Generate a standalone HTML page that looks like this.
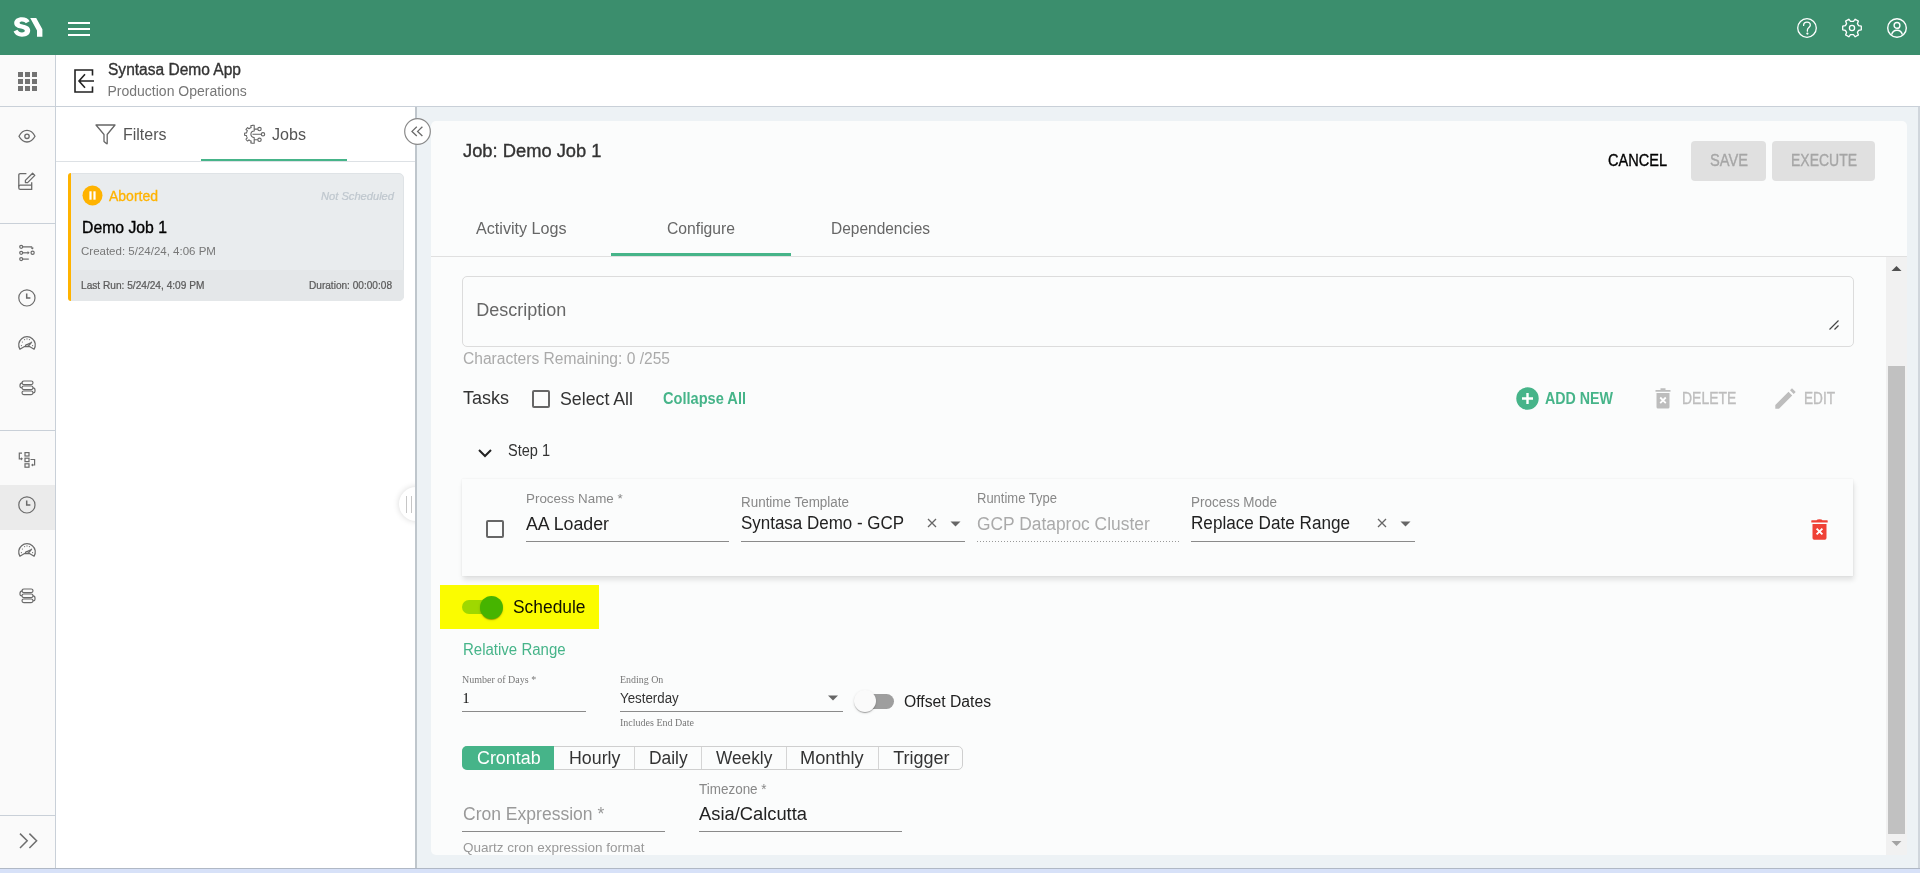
<!DOCTYPE html>
<html><head><meta charset="utf-8">
<style>
*{box-sizing:border-box;margin:0;padding:0}
html,body{width:1920px;height:873px;overflow:hidden;background:#fff;font-family:"Liberation Sans",sans-serif}
.a{position:absolute}
.t{position:absolute;line-height:1;white-space:nowrap}
svg{position:absolute;overflow:visible}
</style></head><body>
<div class="a" style="left:0px;top:0px;width:1920px;height:55px;background:#3b8e6d;"></div>
<div class="a" style="left:0px;top:55px;width:55px;height:813px;background:#fafafa;"></div>
<div class="a" style="left:55px;top:55px;width:1px;height:813px;background:#c9d0d8;"></div>
<div class="a" style="left:0px;top:106px;width:1920px;height:1px;background:#c9d0d8;"></div>
<div class="a" style="left:56px;top:107px;width:359px;height:761px;background:#ffffff;"></div>
<div class="a" style="left:399px;top:487px;width:34px;height:34px;background:#fff;border-radius:50%;box-shadow:0 0 6px rgba(0,0,0,.16)"></div>
<div class="a" style="left:406px;top:496px;width:1px;height:17px;background:#c6c6c6;"></div>
<div class="a" style="left:411px;top:496px;width:1px;height:17px;background:#c6c6c6;"></div>
<div class="a" style="left:415px;top:107px;width:2px;height:761px;background:#bfc6cc;"></div>
<div class="a" style="left:417px;top:107px;width:1501px;height:761px;background:#edf2f5;"></div>
<div class="a" style="left:1918px;top:107px;width:2px;height:761px;background:#d0d6dc;"></div>
<div class="a" style="left:0px;top:868px;width:1920px;height:1px;background:#b0b8c5;"></div>
<div class="a" style="left:0px;top:869px;width:1920px;height:4px;background:#d7e1f8;"></div>
<div class="a" style="left:0px;top:223px;width:55px;height:1px;background:#c9d0d8;"></div>
<div class="a" style="left:0px;top:430px;width:55px;height:1px;background:#c9d0d8;"></div>
<div class="a" style="left:0px;top:815px;width:55px;height:1px;background:#c9d0d8;"></div>
<div class="a" style="left:0px;top:485px;width:55px;height:45px;background:#ebebeb;"></div>
<div class="a" style="left:431px;top:121px;width:1476px;height:734px;background:#fbfcfc;border-radius:5px"></div>
<svg style="left:0;top:0" width="60" height="55" viewBox="0 0 60 55">
<path d="M29.6 21.2 C28.4 18.8 25.6 17.2 22 17.2 C17.4 17.2 14.2 19.6 14.2 23 C14.2 26.6 17.4 27.8 21 28.6 C23.6 29.2 24.8 29.6 24.8 30.8 C24.8 31.8 23.6 32.4 22 32.4 C19.8 32.4 18.2 31.4 17.4 29.8 L13.6 31.6 C14.8 34.6 18 36.8 22 36.8 C27 36.8 30.2 34.4 30.2 30.6 C30.2 26.8 27 25.6 23.4 24.8 C20.8 24.2 19.6 23.8 19.6 22.8 C19.6 22 20.6 21.4 22 21.4 C23.8 21.4 25 22.2 25.8 23.2 Z" fill="#fff"/>
<path d="M30.2 18 L36.2 18 L42.4 29.2 L42.4 36.8 L37 36.8 L37 30.6 Z" fill="#fff"/>
</svg>
<div class="a" style="left:68px;top:22px;width:22px;height:2px;background:#fff;"></div>
<div class="a" style="left:68px;top:27.5px;width:22px;height:2.5px;background:#fff;"></div>
<div class="a" style="left:68px;top:33.5px;width:22px;height:2px;background:#fff;"></div>
<svg style="left:1797px;top:18px" width="20" height="20" viewBox="0 0 20 20" fill="none" stroke="#fff" stroke-width="1.3">
<circle cx="10" cy="10" r="9.3"/>
<path d="M6.6 7.4 C6.6 5.4 8.1 4.2 10 4.2 C11.9 4.2 13.3 5.5 13.3 7.2 C13.3 9.2 10.4 9.8 10.4 12 L10.4 13.2" stroke-linecap="round"/>
<circle cx="10.4" cy="15.6" r="0.5" fill="#fff"/>
</svg>
<svg style="left:1842px;top:18px" width="20" height="20" viewBox="0 0 20 20" fill="none" stroke="#fff" stroke-width="1.3" stroke-linejoin="round">
<g transform="rotate(90 10 10)"><path d="M8.2 0.7 L11.8 0.7 L12.3 3.4 L14.3 4.6 L16.9 3.6 L18.8 6.8 L16.6 8.5 L16.6 11.5 L18.8 13.2 L16.9 16.4 L14.3 15.4 L12.3 16.6 L11.8 19.3 L8.2 19.3 L7.7 16.6 L5.7 15.4 L3.1 16.4 L1.2 13.2 L3.4 11.5 L3.4 8.5 L1.2 6.8 L3.1 3.6 L5.7 4.6 L7.7 3.4 Z"/></g>
<circle cx="10" cy="10" r="2.6"/>
</svg>
<svg style="left:1887px;top:18px" width="20" height="20" viewBox="0 0 20 20" fill="none" stroke="#fff" stroke-width="1.4">
<circle cx="10" cy="10" r="9.3"/>
<circle cx="10" cy="7.4" r="2.9"/>
<path d="M4.6 16.6 C5.4 13.6 7.6 12.2 10 12.2 C12.4 12.2 14.6 13.6 15.4 16.6"/>
</svg>
<div class="a" style="left:18.2px;top:72.2px;width:4.6px;height:4.6px;background:#737373;"></div>
<div class="a" style="left:18.2px;top:79.2px;width:4.6px;height:4.6px;background:#737373;"></div>
<div class="a" style="left:18.2px;top:86.2px;width:4.6px;height:4.6px;background:#737373;"></div>
<div class="a" style="left:25.2px;top:72.2px;width:4.6px;height:4.6px;background:#737373;"></div>
<div class="a" style="left:25.2px;top:79.2px;width:4.6px;height:4.6px;background:#737373;"></div>
<div class="a" style="left:25.2px;top:86.2px;width:4.6px;height:4.6px;background:#737373;"></div>
<div class="a" style="left:32.2px;top:72.2px;width:4.6px;height:4.6px;background:#737373;"></div>
<div class="a" style="left:32.2px;top:79.2px;width:4.6px;height:4.6px;background:#737373;"></div>
<div class="a" style="left:32.2px;top:86.2px;width:4.6px;height:4.6px;background:#737373;"></div>
<svg style="left:18px;top:129px" width="18" height="14" viewBox="0 0 18 14" fill="none" stroke="#6b6b6b" stroke-width="1.3">
<path d="M1 7.2 C3 3.4 6 1.4 9 1.4 C12 1.4 15 3.4 17 7.2 C15 11 12 13 9 13 C6 13 3 11 1 7.2 Z"/><circle cx="9" cy="7.3" r="2.2"/></svg>
<svg style="left:17px;top:172px" width="19" height="19" viewBox="0 0 19 19" fill="none" stroke="#6b6b6b" stroke-width="1.3" stroke-linejoin="round">
<path d="M9.4 1.6 L3.2 1.6 Q1.8 1.6 1.8 3 L1.8 16 Q1.8 17.4 3.2 17.4 L14.7 17.4 L14.7 10.2"/>
<path d="M1.8 14.5 Q1.8 13.2 3.2 13.2 L14.7 13.2"/>
<path d="M8.4 10.6 L8.4 8.4 L15.6 1.2 L17.8 3.4 L10.6 10.6 Z"/></svg>
<svg style="left:19px;top:244px" width="17" height="17" viewBox="0 0 17 17" fill="none" stroke="#6b6b6b" stroke-width="1.2">
<circle cx="2.2" cy="2.8" r="1.5"/><path d="M3.7 2.8 L12.6 2.8 L13.4 3.8"/><path d="M11.6 3.8 L15 3.8 L13.3 5.6 Z" fill="#6b6b6b" stroke="none"/>
<circle cx="2.2" cy="8.8" r="1.5"/><path d="M3.7 8.8 L9 8.8"/><path d="M8.6 7 L10.6 8.8 L8.6 10.6 Z" fill="#6b6b6b" stroke="none"/><circle cx="13.6" cy="8.8" r="1.6"/>
<circle cx="2.2" cy="15.1" r="1.5"/><path d="M3.7 15.1 L9.8 15.1"/></svg>
<svg style="left:18px;top:289px" width="18" height="18" viewBox="0 0 18 18" fill="none" stroke="#6b6b6b" stroke-width="1.2">
<circle cx="8.9" cy="8.9" r="8.1"/><path d="M8.7 4.6 L8.7 8.9 L12.4 8.9" stroke-width="1.5"/></svg>
<svg style="left:18px;top:336px" width="18" height="14" viewBox="0 0 18 14" fill="none" stroke="#6b6b6b" stroke-width="1.2" stroke-linejoin="round">
<path d="M1.9 13.3 A8.3 8.3 0 1 1 16.1 13.3 L11.5 10.6 L6.5 10.6 Z"/>
<g fill="#6b6b6b" stroke="none"><circle cx="3.4" cy="9.6" r=".6"/><circle cx="4.4" cy="6" r=".6"/><circle cx="6.6" cy="3.6" r=".6"/><circle cx="9" cy="2.9" r=".6"/><circle cx="11.4" cy="3.6" r=".6"/><circle cx="13.6" cy="6" r=".6"/><circle cx="14.6" cy="9.6" r=".6"/></g>
<path d="M7.4 9.6 Q8 8.2 9.6 8.4 L13.4 6.6 L10.6 9.8 Q9 11 7.4 9.6 Z"/></svg>
<svg style="left:20px;top:380px" width="16" height="15" viewBox="0 0 16 15" fill="none" stroke="#6b6b6b" stroke-width="1.2">
<rect x="2" y="1" width="11" height="3.6" rx="1.8"/><rect x="2" y="6" width="11" height="3.6" rx="1.8"/><rect x="2" y="11" width="11" height="3.6" rx="1.8"/>
<path d="M2.6 2.8 Q0 2.8 0 5.2 L0 6.4 Q0 7.8 2 7.8"/><path d="M13 7.8 Q15 7.8 15 10 L15 11.2 Q15 12.8 13 12.8"/></svg>
<svg style="left:18px;top:452px" width="18" height="17" viewBox="0 0 18 17" fill="none" stroke="#6b6b6b" stroke-width="1.2">
<rect x="7" y="0.6" width="4" height="3.4"/><rect x="7" y="6.2" width="4" height="3.4"/><rect x="7" y="11.8" width="4" height="3.4"/>
<path d="M4 1.2 L1.3 1.2 L1.3 6.8 L3.4 6.8"/><path d="M3 5.2 L5 6.8 L3 8.4 Z" fill="#6b6b6b" stroke="none"/>
<path d="M12.5 7.5 L16.6 7.5 L16.6 13 L14.4 13"/><path d="M15 11.4 L13 13 L15 14.6 Z" fill="#6b6b6b" stroke="none"/></svg>
<svg style="left:18px;top:496px" width="18" height="18" viewBox="0 0 18 18" fill="none" stroke="#6b6b6b" stroke-width="1.2">
<circle cx="8.9" cy="8.9" r="8.1"/><path d="M8.7 4.6 L8.7 8.9 L12.4 8.9" stroke-width="1.5"/></svg>
<svg style="left:18px;top:543px" width="18" height="14" viewBox="0 0 18 14" fill="none" stroke="#6b6b6b" stroke-width="1.2" stroke-linejoin="round">
<path d="M1.9 13.3 A8.3 8.3 0 1 1 16.1 13.3 L11.5 10.6 L6.5 10.6 Z"/>
<g fill="#6b6b6b" stroke="none"><circle cx="3.4" cy="9.6" r=".6"/><circle cx="4.4" cy="6" r=".6"/><circle cx="6.6" cy="3.6" r=".6"/><circle cx="9" cy="2.9" r=".6"/><circle cx="11.4" cy="3.6" r=".6"/><circle cx="13.6" cy="6" r=".6"/><circle cx="14.6" cy="9.6" r=".6"/></g>
<path d="M7.4 9.6 Q8 8.2 9.6 8.4 L13.4 6.6 L10.6 9.8 Q9 11 7.4 9.6 Z"/></svg>
<svg style="left:20px;top:588px" width="16" height="15" viewBox="0 0 16 15" fill="none" stroke="#6b6b6b" stroke-width="1.2">
<rect x="2" y="1" width="11" height="3.6" rx="1.8"/><rect x="2" y="6" width="11" height="3.6" rx="1.8"/><rect x="2" y="11" width="11" height="3.6" rx="1.8"/>
<path d="M2.6 2.8 Q0 2.8 0 5.2 L0 6.4 Q0 7.8 2 7.8"/><path d="M13 7.8 Q15 7.8 15 10 L15 11.2 Q15 12.8 13 12.8"/></svg>
<svg style="left:19px;top:833px" width="19" height="16" viewBox="0 0 19 16" fill="none" stroke="#6e6e6e" stroke-width="1.5">
<path d="M1 0.6 L8.2 7.8 L1 15"/><path d="M10.4 0.6 L17.6 7.8 L10.4 15"/></svg>
<svg style="left:74px;top:69px" width="21" height="24" viewBox="0 0 21 24" fill="none" stroke="#222" stroke-width="1.6">
<path d="M18.5 6.5 L18.5 1 L1 1 L1 23 L18.5 23 L18.5 17.5"/><path d="M5 12 L20 12 M11 5.2 L5 12 L11 18.8"/></svg>
<div class="a" style="left:56px;top:161px;width:359px;height:1px;background:#dde1e5;"></div>
<div class="a" style="left:201px;top:159px;width:146px;height:2px;background:#46b489;"></div>
<svg style="left:95px;top:124px" width="21" height="21" viewBox="0 0 21 21" fill="none" stroke="#666" stroke-width="1.3" stroke-linejoin="round">
<path d="M1 1 L20 1 L12.2 10.5 L12.2 19.3 Q12.2 20.2 11.4 19.6 L9 17.6 L9 10.5 Z"/></svg>
<svg style="left:243px;top:124px" width="23" height="21" viewBox="0 0 23 21" fill="none" stroke="#666" stroke-width="1.1" stroke-linejoin="round">
<path d="M11.2 1.3 L10.29 1.31 L9.97 1.32 L9.66 1.35 L9.35 1.39 L9.04 1.44 L8.73 1.50 L8.42 1.57 L8.12 1.65 L7.82 1.74 L8.14 3.53 L7.90 3.62 L7.67 3.72 L7.44 3.83 L7.22 3.94 L7.00 4.06 L6.78 4.19 L6.57 4.33 L6.37 4.48 L6.17 4.63 L5.97 4.78 L4.58 3.61 L4.35 3.83 L4.13 4.05 L3.91 4.28 L3.71 4.51 L3.51 4.76 L3.32 5.01 L3.14 5.27 L2.97 5.53 L4.36 6.70 L4.24 6.92 L4.13 7.14 L4.02 7.37 L3.92 7.60 L3.83 7.84 L3.75 8.08 L3.68 8.32 L3.61 8.56 L3.56 8.80 L3.51 9.05 L1.69 9.05 L1.65 9.36 L1.62 9.67 L1.61 9.99 L1.60 10.30 L1.61 10.61 L1.62 10.93 L1.65 11.24 L1.69 11.55 L3.51 11.55 L3.56 11.80 L3.61 12.04 L3.68 12.28 L3.75 12.52 L3.83 12.76 L3.92 13.00 L4.02 13.23 L4.13 13.46 L4.24 13.68 L4.36 13.90 L2.97 15.07 L3.14 15.33 L3.32 15.59 L3.51 15.84 L3.71 16.09 L3.91 16.32 L4.13 16.55 L4.35 16.77 L4.58 16.99 L5.97 15.82 L6.17 15.97 L6.37 16.12 L6.57 16.27 L6.78 16.41 L7.00 16.54 L7.22 16.66 L7.44 16.77 L7.67 16.88 L7.90 16.98 L8.14 17.07 L7.82 18.86 L8.12 18.95 L8.42 19.03 L8.73 19.10 L9.04 19.16 L9.35 19.21 L9.66 19.25 L9.97 19.28 L10.29 19.29 L11.2 19.3 L11.2 13.6 A3.3 3.3 0 0 1 11.2 7 Z"/>
<path d="M9.5 10.3 L18.3 10.3 M11.2 5.1 L14.8 5.1 M11.2 15.8 L14.8 15.8"/>
<circle cx="16.5" cy="5.1" r="1.7"/><circle cx="20" cy="10.3" r="1.7"/><circle cx="16.5" cy="15.8" r="1.7"/></svg>
<div class="a" style="left:68px;top:173px;width:336px;height:128px;background:#e9ecee;border-radius:5px;border:1px solid #dfe3e6"></div>
<div class="a" style="left:71px;top:270px;width:333px;height:31px;background:#e4e7e9;border-bottom-right-radius:5px"></div>
<div class="a" style="left:68px;top:173px;width:3px;height:128px;background:#ffb300;border-radius:5px 0 0 5px"></div>
<svg style="left:82px;top:185px" width="21" height="21" viewBox="0 0 21 21"><circle cx="10.5" cy="10.5" r="10" fill="#ffb300"/>
<rect x="7.4" y="6.3" width="2.2" height="8.4" fill="#fff"/><rect x="11.4" y="6.3" width="2.2" height="8.4" fill="#fff"/></svg>
<svg style="left:404px;top:118px" width="27" height="27" viewBox="0 0 27 27" fill="#fff" stroke="#8a8a8a" stroke-width="1.2">
<circle cx="13.5" cy="13.5" r="12.8"/><path d="M12.8 8.8 L8 13.4 L12.8 18 M18.4 8.8 L13.6 13.4 L18.4 18" fill="none" stroke="#6a6a6a" stroke-width="1.3"/></svg>
<div class="a" style="left:1691px;top:141px;width:75px;height:40px;background:#e0e0e0;border-radius:4px"></div>
<div class="a" style="left:1772px;top:141px;width:103px;height:40px;background:#e0e0e0;border-radius:4px"></div>
<div class="a" style="left:431px;top:256px;width:1476px;height:1px;background:#e0e0e0;"></div>
<div class="a" style="left:611px;top:253px;width:180px;height:3px;background:#46b489;"></div>
<div class="a" style="left:1886px;top:257px;width:21px;height:598px;background:#f1f1f1;"></div>
<div class="a" style="left:1888px;top:366px;width:17px;height:468px;background:#c1c1c1;"></div>
<svg style="left:1891px;top:265px" width="11" height="7" viewBox="0 0 11 7"><path d="M0.5 6 L5.5 1 L10.5 6 Z" fill="#505050"/></svg>
<svg style="left:1891px;top:840px" width="11" height="7" viewBox="0 0 11 7"><path d="M0.5 1 L5.5 6 L10.5 1 Z" fill="#a3a3a3"/></svg>
<div class="a" style="left:462px;top:276px;width:1392px;height:71px;background:transparent;border:1px solid #dcdcdc;border-radius:5px"></div>
<svg style="left:1828px;top:319px" width="12" height="12" viewBox="0 0 12 12" stroke="#444" stroke-width="1.2"><path d="M1.5 10.5 L10.5 1.5 M6.5 10.5 L10.5 6.5"/></svg>
<div class="a" style="left:532px;top:390px;width:18px;height:18px;background:transparent;border:2px solid #666;border-radius:2px"></div>
<svg style="left:1516px;top:387px" width="23" height="23" viewBox="0 0 23 23"><circle cx="11.5" cy="11.5" r="11.2" fill="#46b489"/>
<path d="M11.5 6 L11.5 17 M6 11.5 L17 11.5" stroke="#fff" stroke-width="2.4"/></svg>
<svg style="left:1655px;top:388px" width="16" height="21" viewBox="0 0 16 21"><path d="M0.5 2 L15.5 2 L15.5 3.8 L0.5 3.8 Z M5.5 0.3 L10.5 0.3 L10.5 2 L5.5 2 Z" fill="#bdbdbd"/>
<path d="M1.5 5 L14.5 5 L14.5 19 Q14.5 20.6 13 20.6 L3 20.6 Q1.5 20.6 1.5 19 Z" fill="#bdbdbd"/><path d="M5.2 9.5 L10.8 15.1 M10.8 9.5 L5.2 15.1" stroke="#fff" stroke-width="1.8"/></svg>
<svg style="left:1775px;top:388px" width="21" height="21" viewBox="0 0 21 21"><path d="M0.3 17 L13.5 3.8 L17.2 7.5 L4 20.7 L0.3 20.7 Z M15 2.3 L17 0.3 L20.7 4 L18.7 6 Z" fill="#bdbdbd"/></svg>
<svg style="left:478px;top:449px" width="14" height="9" viewBox="0 0 14 9" fill="none" stroke="#222" stroke-width="2"><path d="M1 1 L7 7 L13 1"/></svg>
<div class="a" style="left:462px;top:479px;width:1391px;height:97px;background:#fbfcfc;box-shadow:1px 4px 5px rgba(0,0,0,.10),0 0 2px rgba(0,0,0,.07)"></div>
<div class="a" style="left:486px;top:520px;width:18px;height:18px;background:transparent;border:2px solid #666;border-radius:2px"></div>
<div class="a" style="left:526px;top:541px;width:203px;height:1px;background:#8a8a8a;"></div>
<div class="a" style="left:741px;top:541px;width:224px;height:1px;background:#8a8a8a;"></div>
<svg style="left:927px;top:518px" width="10" height="10" viewBox="0 0 10 10" stroke="#666" stroke-width="1.3"><path d="M1 1 L9 9 M9 1 L1 9"/></svg>
<svg style="left:950px;top:521px" width="11" height="6" viewBox="0 0 11 6"><path d="M0.5 0.5 L10.5 0.5 L5.5 5.5 Z" fill="#666"/></svg>
<div class="a" style="left:977px;top:541px;width:202px;height:1px;background-image:linear-gradient(to right,#999 50%,transparent 50%);background-size:3px 1px"></div>
<div class="a" style="left:1191px;top:541px;width:224px;height:1px;background:#8a8a8a;"></div>
<svg style="left:1377px;top:518px" width="10" height="10" viewBox="0 0 10 10" stroke="#666" stroke-width="1.3"><path d="M1 1 L9 9 M9 1 L1 9"/></svg>
<svg style="left:1400px;top:521px" width="11" height="6" viewBox="0 0 11 6"><path d="M0.5 0.5 L10.5 0.5 L5.5 5.5 Z" fill="#666"/></svg>
<svg style="left:1811px;top:519px" width="17" height="21" viewBox="0 0 17 21"><path d="M0.3 1.8 Q0.3 1.3 0.8 1.3 L5.5 1.3 Q6 0.2 8.5 0.2 Q11 0.2 11.5 1.3 L16.2 1.3 Q16.7 1.3 16.7 1.8 L16.7 3.6 L0.3 3.6 Z" fill="#ef4136"/>
<path d="M1.5 5 L15.5 5 L15.5 19 Q15.5 20.7 13.8 20.7 L3.2 20.7 Q1.5 20.7 1.5 19 Z" fill="#ef4136"/><path d="M5.6 9.6 L11.4 15.4 M11.4 9.6 L5.6 15.4" stroke="#fff" stroke-width="1.9"/></svg>
<div class="a" style="left:462px;top:600px;width:30px;height:14px;background:#9fd8c2;border-radius:7px"></div>
<div class="a" style="left:480px;top:596px;width:23px;height:23px;border-radius:50%;background:#46b489;box-shadow:0 2px 1px -1px rgba(0,0,0,.2),0 1px 1px 0 rgba(0,0,0,.14),0 1px 3px 0 rgba(0,0,0,.12)"></div>
<div class="a" style="left:462px;top:711px;width:124px;height:1px;background:#8a8a8a;"></div>
<div class="a" style="left:620px;top:711px;width:223px;height:1px;background:#8a8a8a;"></div>
<svg style="left:828px;top:695px" width="10" height="6" viewBox="0 0 10 6"><path d="M0 0.5 L10 0.5 L5 5.5 Z" fill="#666"/></svg>
<div class="a" style="left:860px;top:693.5px;width:34px;height:15px;background:#9e9e9e;border-radius:7.5px"></div>
<div class="a" style="left:854px;top:690px;width:22px;height:22px;background:#fafafa;border-radius:50%;box-shadow:0 2px 1px -1px rgba(0,0,0,.2),0 1px 1px 0 rgba(0,0,0,.14),0 1px 3px 0 rgba(0,0,0,.12)"></div>
<div class="a" style="left:462px;top:746px;width:501px;height:24px;background:transparent;border:1px solid #cfcfcf;border-radius:5px"></div>
<div class="a" style="left:462px;top:746px;width:92px;height:24px;background:#46b489;border-radius:5px 0 0 5px"></div>
<div class="a" style="left:634px;top:747px;width:1px;height:22px;background:#d5d5d5;"></div>
<div class="a" style="left:701px;top:747px;width:1px;height:22px;background:#d5d5d5;"></div>
<div class="a" style="left:786px;top:747px;width:1px;height:22px;background:#d5d5d5;"></div>
<div class="a" style="left:878px;top:747px;width:1px;height:22px;background:#d5d5d5;"></div>
<div class="a" style="left:462px;top:831px;width:203px;height:1px;background:#8a8a8a;"></div>
<div class="a" style="left:699px;top:831px;width:203px;height:1px;background:#8a8a8a;"></div>
<div class="t" style="top:62.45px;font-size:16px;color:#333;-webkit-text-stroke:0.35px #333;transform:scaleX(0.9710);transform-origin:0 0;left:107.5px;">Syntasa Demo App</div>
<div class="t" style="top:84.15px;font-size:14px;color:#777;left:107.5px;">Production Operations</div>
<div class="t" style="top:126.03px;font-size:16.5px;color:#555;transform:scaleX(0.9683);transform-origin:0 0;left:122.5px;">Filters</div>
<div class="t" style="top:126.03px;font-size:16.5px;color:#555;transform:scaleX(0.9753);transform-origin:0 0;left:272px;">Jobs</div>
<div class="t" style="top:188.75px;font-size:14px;color:#ffb300;-webkit-text-stroke:0.31px #ffb300;left:109px;">Aborted</div>
<div class="t" style="top:190.69px;font-size:11px;color:#bfc7ce;-webkit-text-stroke:0.24px #bfc7ce;font-style:italic;transform:scaleX(1.0115);transform-origin:0 0;left:320.5px;">Not Scheduled</div>
<div class="t" style="top:220.15px;font-size:16px;color:#000;-webkit-text-stroke:0.35px #000;transform:scaleX(0.9853);transform-origin:0 0;left:81.7px;">Demo Job 1</div>
<div class="t" style="top:245.96px;font-size:11.5px;color:#777;left:81px;">Created: 5/24/24, 4:06 PM</div>
<div class="t" style="top:279.71px;font-size:10.5px;color:#5a5a5a;-webkit-text-stroke:0.23px #5a5a5a;transform:scaleX(0.9652);transform-origin:0 0;left:81px;">Last Run: 5/24/24, 4:09 PM</div>
<div class="t" style="top:279.71px;font-size:10.5px;color:#5a5a5a;-webkit-text-stroke:0.23px #5a5a5a;transform:scaleX(0.9606);transform-origin:0 0;left:309.3px;">Duration: 00:00:08</div>
<div class="t" style="top:141.76px;font-size:18px;color:#333;-webkit-text-stroke:0.35px #333;transform:scaleX(1.0178);transform-origin:0 0;left:462.5px;">Job: Demo Job 1</div>
<div class="t" style="top:153.45px;font-size:16px;color:#000;-webkit-text-stroke:0.35px #000;transform:scaleX(0.9090);transform-origin:0 0;left:1608px;">CANCEL</div>
<div class="t" style="top:153.45px;font-size:16px;color:#a6a6a6;-webkit-text-stroke:0.35px #a6a6a6;transform:scaleX(0.9157);transform-origin:0 0;left:1710px;">SAVE</div>
<div class="t" style="top:153.45px;font-size:16px;color:#a6a6a6;-webkit-text-stroke:0.35px #a6a6a6;transform:scaleX(0.8733);transform-origin:0 0;left:1791px;">EXECUTE</div>
<div class="t" style="top:221.45px;font-size:16px;color:#666;transform:scaleX(1.0077);transform-origin:0 0;left:475.5px;">Activity Logs</div>
<div class="t" style="top:221.45px;font-size:16px;color:#666;transform:scaleX(0.9802);transform-origin:0 0;left:666.8px;">Configure</div>
<div class="t" style="top:221.45px;font-size:16px;color:#666;transform:scaleX(0.9678);transform-origin:0 0;left:831px;">Dependencies</div>
<div class="t" style="top:301.01px;font-size:18px;color:#666;left:476.25px;">Description</div>
<div class="t" style="top:351.05px;font-size:16px;color:#aaa;transform:scaleX(0.9738);transform-origin:0 0;left:463px;">Characters Remaining: 0 /255</div>
<div class="t" style="top:388.76px;font-size:18px;color:#333;left:463px;">Tasks</div>
<div class="t" style="top:389.76px;font-size:18px;color:#333;transform:scaleX(0.9859);transform-origin:0 0;left:559.6px;">Select All</div>
<div class="t" style="top:391.45px;font-size:16px;color:#46b489;font-weight:700;transform:scaleX(0.9122);transform-origin:0 0;left:662.8px;">Collapse All</div>
<div class="t" style="top:391.45px;font-size:16px;color:#46b489;font-weight:700;transform:scaleX(0.8896);transform-origin:0 0;left:1545.4px;">ADD NEW</div>
<div class="t" style="top:391.45px;font-size:16px;color:#bdbdbd;-webkit-text-stroke:0.35px #bdbdbd;transform:scaleX(0.8723);transform-origin:0 0;left:1681.7px;">DELETE</div>
<div class="t" style="top:391.45px;font-size:16px;color:#bdbdbd;-webkit-text-stroke:0.35px #bdbdbd;transform:scaleX(0.8504);transform-origin:0 0;left:1804px;">EDIT</div>
<div class="t" style="top:443.15px;font-size:16px;color:#333;transform:scaleX(0.9078);transform-origin:0 0;left:508px;">Step 1</div>
<div class="t" style="top:491.79px;font-size:13px;color:#888;transform:scaleX(1.0296);transform-origin:0 0;left:526.3px;">Process Name *</div>
<div class="t" style="top:514.76px;font-size:18px;color:#222;transform:scaleX(0.9872);transform-origin:0 0;left:526px;">AA Loader</div>
<div class="t" style="top:495.15px;font-size:14px;color:#888;transform:scaleX(0.9593);transform-origin:0 0;left:740.8px;">Runtime Template</div>
<div class="t" style="top:513.56px;font-size:18px;color:#222;transform:scaleX(0.9419);transform-origin:0 0;left:741px;">Syntasa Demo - GCP</div>
<div class="t" style="top:491.15px;font-size:14px;color:#888;transform:scaleX(0.9289);transform-origin:0 0;left:976.8px;">Runtime Type</div>
<div class="t" style="top:514.76px;font-size:18px;color:#aaa;transform:scaleX(0.9662);transform-origin:0 0;left:977px;">GCP Dataproc Cluster</div>
<div class="t" style="top:494.85px;font-size:14px;color:#888;transform:scaleX(0.9611);transform-origin:0 0;left:1190.6px;">Process Mode</div>
<div class="t" style="top:513.76px;font-size:18px;color:#222;transform:scaleX(0.9515);transform-origin:0 0;left:1191px;">Replace Date Range</div>
<div class="t" style="top:597.76px;font-size:18px;color:#111;transform:scaleX(0.9659);transform-origin:0 0;left:512.5px;">Schedule</div>
<div class="t" style="top:642.15px;font-size:16px;color:#46b489;transform:scaleX(0.9378);transform-origin:0 0;left:463px;">Relative Range</div>
<div class="t" style="top:674.92px;font-size:10px;color:#777;font-family:'Liberation Serif',serif;left:462px;">Number of Days *</div>
<div class="t" style="top:691.67px;font-size:14px;color:#000;font-family:'Liberation Serif',serif;left:462.5px;">1</div>
<div class="t" style="top:674.92px;font-size:10px;color:#777;font-family:'Liberation Serif',serif;transform:scaleX(0.9929);transform-origin:0 0;left:620px;">Ending On</div>
<div class="t" style="top:690.95px;font-size:14px;color:#333;transform:scaleX(0.9506);transform-origin:0 0;left:620px;">Yesterday</div>
<div class="t" style="top:718.12px;font-size:10px;color:#777;font-family:'Liberation Serif',serif;left:620px;">Includes End Date</div>
<div class="t" style="top:694.45px;font-size:16px;color:#222;transform:scaleX(0.9815);transform-origin:0 0;left:903.8px;">Offset Dates</div>
<div class="t" style="top:748.76px;font-size:18px;color:#fff;transform:scaleX(0.9930);transform-origin:0 0;left:476.7px;">Crontab</div>
<div class="t" style="top:748.76px;font-size:18px;color:#333;transform:scaleX(0.9882);transform-origin:0 0;left:568.8px;">Hourly</div>
<div class="t" style="top:748.76px;font-size:18px;color:#333;transform:scaleX(0.9671);transform-origin:0 0;left:648.7px;">Daily</div>
<div class="t" style="top:748.76px;font-size:18px;color:#333;transform:scaleX(0.9593);transform-origin:0 0;left:715.6px;">Weekly</div>
<div class="t" style="top:748.76px;font-size:18px;color:#333;transform:scaleX(1.0106);transform-origin:0 0;left:800.3px;">Monthly</div>
<div class="t" style="top:748.76px;font-size:18px;color:#333;left:893.2px;">Trigger</div>
<div class="t" style="top:804.56px;font-size:18px;color:#999;transform:scaleX(0.9740);transform-origin:0 0;left:462.7px;">Cron Expression *</div>
<div class="t" style="top:840.99px;font-size:13px;color:#999;transform:scaleX(1.0385);transform-origin:0 0;left:462.7px;">Quartz cron expression format</div>
<div class="t" style="top:781.55px;font-size:14px;color:#888;transform:scaleX(0.9616);transform-origin:0 0;left:699.4px;">Timezone *</div>
<div class="t" style="top:804.56px;font-size:18px;color:#222;transform:scaleX(1.0183);transform-origin:0 0;left:699px;">Asia/Calcutta</div>
<div class="a" style="left:440px;top:585px;width:159px;height:44px;background:#ffff00;mix-blend-mode:multiply"></div>
</body></html>
